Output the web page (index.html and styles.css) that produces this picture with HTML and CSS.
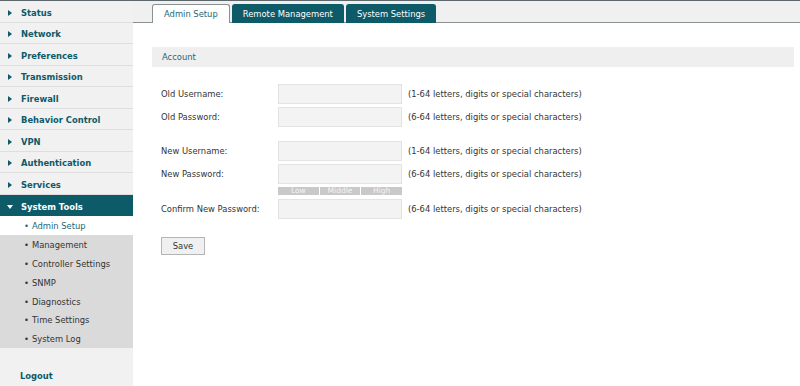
FILE: index.html
```html
<!DOCTYPE html>
<html lang="en">
<head>
    <meta charset="UTF-8">
    <title>System Tools - Admin Setup</title>
    <link rel="stylesheet" href="styles.css">
</head>
<body>
    <div class="page">
        <aside class="sidebar">
            <ul class="menu">
                <li class="menu-item"><span class="arrow"></span>Status</li>
                <li class="menu-item"><span class="arrow"></span>Network</li>
                <li class="menu-item"><span class="arrow"></span>Preferences</li>
                <li class="menu-item"><span class="arrow"></span>Transmission</li>
                <li class="menu-item"><span class="arrow"></span>Firewall</li>
                <li class="menu-item"><span class="arrow"></span>Behavior Control</li>
                <li class="menu-item"><span class="arrow"></span>VPN</li>
                <li class="menu-item"><span class="arrow"></span>Authentication</li>
                <li class="menu-item"><span class="arrow"></span>Services</li>
                <li class="menu-item open"><span class="arrow"></span>System Tools</li>
            </ul>
            <ul class="submenu">
                <li class="active">Admin Setup</li>
                <li>Management</li>
                <li>Controller Settings</li>
                <li>SNMP</li>
                <li>Diagnostics</li>
                <li>Time Settings</li>
                <li>System Log</li>
            </ul>
            <div class="logout">Logout</div>
        </aside>

        <main class="main">
            <div class="tabs">
                <div class="tab active">Admin Setup</div>
                <div class="tab">Remote Management</div>
                <div class="tab">System Settings</div>
            </div>

            <div class="content">
                <div class="section-title">Account</div>
                <form class="form">
                    <div class="row">
                        <label>Old Username:</label>
                        <input type="text" class="field">
                        <span class="hint">(1-64 letters, digits or special characters)</span>
                    </div>
                    <div class="row">
                        <label>Old Password:</label>
                        <input type="password" class="field">
                        <span class="hint">(6-64 letters, digits or special characters)</span>
                    </div>
                    <div class="row spaced">
                        <label>New Username:</label>
                        <input type="text" class="field">
                        <span class="hint">(1-64 letters, digits or special characters)</span>
                    </div>
                    <div class="row">
                        <label>New Password:</label>
                        <input type="password" class="field">
                        <span class="hint">(6-64 letters, digits or special characters)</span>
                    </div>
                    <div class="strength">
                        <span>Low</span>
                        <span>Middle</span>
                        <span>High</span>
                    </div>
                    <div class="row">
                        <label>Confirm New Password:</label>
                        <input type="password" class="field">
                        <span class="hint">(6-64 letters, digits or special characters)</span>
                    </div>
                    <button type="button" class="save">Save</button>
                </form>
            </div>
        </main>
    </div>
</body>
</html>
```

FILE: styles.css
```css
html, body {
    margin: 0;
    padding: 0;
    height: 100%;
    overflow: hidden;
}
body {
    font-family: "DejaVu Sans", Verdana, sans-serif;
    font-size: 8.4px;
    color: #333;
    background: #fff;
    border-top: 1px solid #5d686d;
    box-sizing: border-box;
}
.page {
    display: flex;
    height: 100%;
}

/* left menu */
.sidebar {
    width: 133px;
    flex-shrink: 0;
    display: flex;
    flex-direction: column;
    background: #f1f1f1;
}
.menu, .submenu {
    list-style: none;
    margin: 0;
    padding: 0;
}
.menu-item {
    display: flex;
    align-items: center;
    height: 21.5px;
    box-sizing: border-box;
    padding-top: 3px;
    border-bottom: 1px solid #dedede;
    font-weight: bold;
    color: #0d5a68;
}
.arrow {
    width: 0;
    height: 0;
    margin: 0 9px 0 8px;
    border-left: 4px solid #0d5a68;
    border-top: 3px solid transparent;
    border-bottom: 3px solid transparent;
}
.menu-item.open {
    background: #0d5a68;
    color: #fff;
    border-bottom: none;
}
.menu-item.open .arrow {
    margin: 0 8px 0 7px;
    border-top: 4px solid #fff;
    border-left: 3px solid transparent;
    border-right: 3px solid transparent;
    border-bottom: none;
}
.submenu {
    background: #dadada;
}
.submenu li {
    height: 18.9px;
    line-height: 18.9px;
    padding: 1px 0 0 24px;
    box-sizing: border-box;
}
.submenu li::before {
    content: "•";
    margin-right: 3px;
}
.submenu li.active {
    background: #fff;
    color: #1a6878;
}
.logout {
    margin-top: auto;
    padding-left: 20px;
    height: 20px;
    line-height: 20px;
    font-weight: bold;
    color: #0d5a68;
}

/* main area */
.main {
    flex: 1;
}
.tabs {
    display: flex;
    align-items: flex-end;
    gap: 2px;
    height: 21px;
    padding-left: 19px;
    background: #f0f0f0;
    border-bottom: 1px solid #8a8f91;
}
.tab {
    height: 18px;
    line-height: 19px;
    margin-bottom: -1px;
    padding: 0 10px;
    border: 1px solid #0d5a68;
    border-bottom: none;
    border-radius: 3px 3px 0 0;
    background: #0d5a68;
    color: #fff;
}
.tab.active {
    padding: 0 11px;
    background: #fff;
    color: #1a6878;
    border-color: #8a8f91;
}
.content {
    padding: 24px 6px 0 19px;
}
.section-title {
    height: 20px;
    line-height: 21px;
    padding-left: 10px;
    background: #efefef;
    color: #1a6878;
}

/* account form */
.form {
    padding: 17px 0 0 9px;
}
.row {
    display: flex;
    align-items: center;
    margin-bottom: 3px;
}
.row.spaced {
    margin-top: 14px;
}
.row label {
    width: 117px;
}
.field {
    width: 124px;
    height: 20px;
    box-sizing: border-box;
    margin: 0 6px 0 0;
    border: 1px solid #e3e3e3;
    background: #f3f3f3;
}
.strength {
    display: flex;
    gap: 1px;
    width: 124px;
    height: 8px;
    margin: 0 0 4px 117px;
}
.strength span {
    flex: 1;
    background: #c9c9c9;
    color: #f4f4f4;
    font-size: 7.5px;
    line-height: 8px;
    text-align: center;
}
.save {
    margin-top: 15px;
    width: 44px;
    height: 18px;
    padding: 0;
    font-family: inherit;
    font-size: 8.4px;
    color: #333;
    background: #f0f0f0;
    border: 1px solid #b5b5b5;
}
```
